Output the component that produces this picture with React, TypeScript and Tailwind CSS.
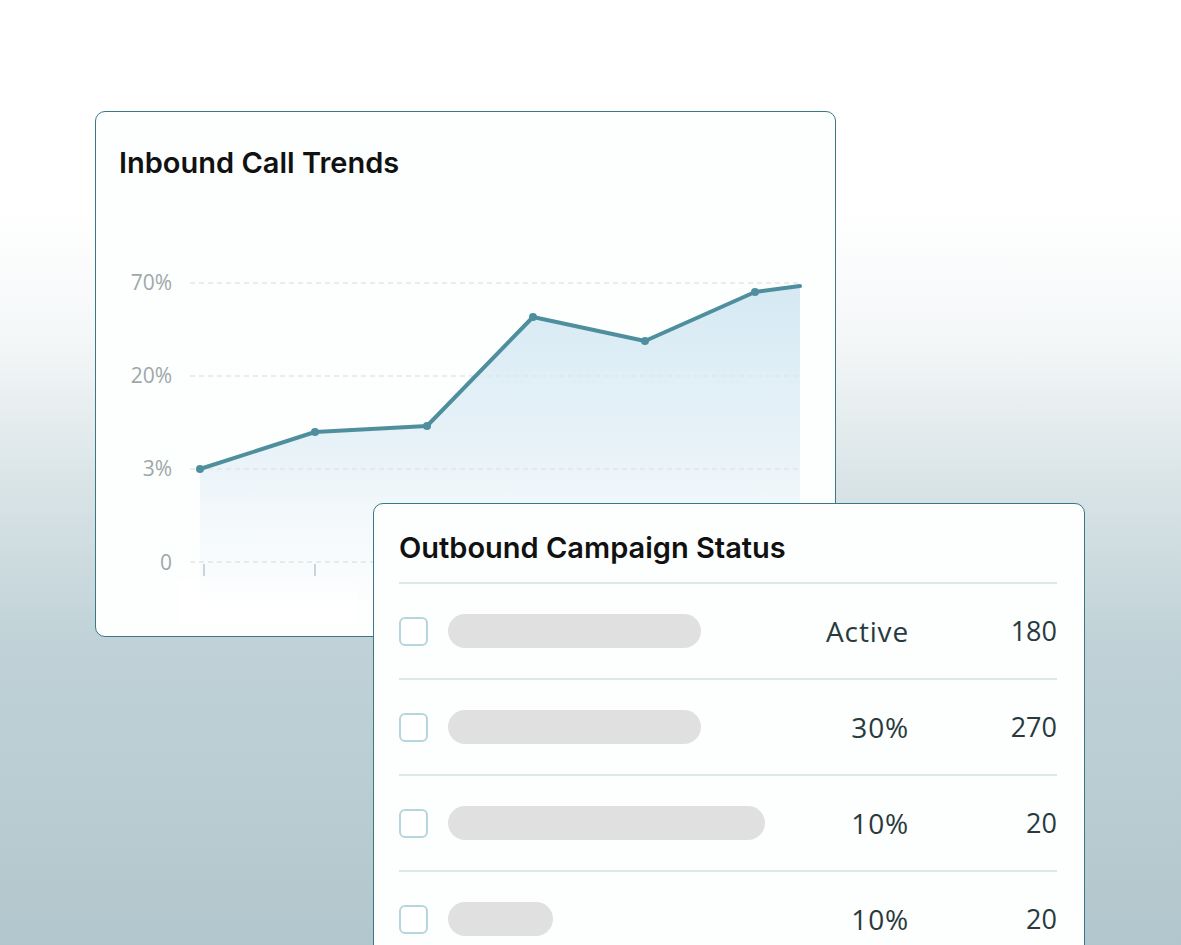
import React from "react";

const rows = [
  { pill: 253, status: "Active", num: "180" },
  { pill: 253, status: "30%", num: "270" },
  { pill: 317, status: "10%", num: "20" },
  { pill: 105, status: "10%", num: "20" },
];

function Chart() {
  const pts: [number, number][] = [
    [104, 269],
    [219, 232],
    [331, 226],
    [437, 117],
    [549, 141],
    [659, 92],
    [704, 86],
  ];
  const line = pts.map((p) => p.join(",")).join(" ");
  const area = `${pts[0][0]},400 ${line} ${pts[pts.length - 1][0]},400`;
  const grid = [83, 176, 269, 362];
  const labels: [string, number][] = [
    ["70%", 90],
    ["20%", 183],
    ["3%", 276],
    ["0", 370],
  ];
  return (
    <svg width="739" height="436" viewBox="0 0 739 436" className="block">
      <defs>
        <linearGradient id="fillg" x1="0" y1="0" x2="0" y2="1">
          <stop offset="0%" stopColor="#d3e8f3" stopOpacity="0.95" />
          <stop offset="55%" stopColor="#e4f0f7" stopOpacity="0.8" />
          <stop offset="100%" stopColor="#f8fbfc" stopOpacity="0.3" />
        </linearGradient>
      </defs>
      <rect x="82" y="380" width="180" height="45" fill="#ffffff" />
      <polygon points={area} fill="url(#fillg)" />
      {grid.map((y) => (
        <line
          key={y}
          x1="94"
          x2="704"
          y1={y}
          y2={y}
          stroke="#dfe6e9"
          strokeWidth="1.5"
          strokeDasharray="5 4"
        />
      ))}
      {labels.map(([t, y]) => (
        <text
          key={t}
          x="76"
          y={y}
          textAnchor="end"
          fill="#9ea8ab"
          fontSize="21"
          fontFamily="'Open Sans', sans-serif"
        >
          {t}
        </text>
      ))}
      <line x1="108" x2="108" y1="364" y2="376" stroke="#b9c8cd" strokeWidth="1.5" />
      <line x1="219" x2="219" y1="364" y2="376" stroke="#b9c8cd" strokeWidth="1.5" />
      <polyline
        points={line}
        fill="none"
        stroke="#4f8f9d"
        strokeWidth="4"
        strokeLinejoin="round"
        strokeLinecap="round"
      />
      {pts.slice(0, 6).map(([x, y]) => (
        <circle key={x} cx={x} cy={y} r="4" fill="#4f8f9d" />
      ))}
    </svg>
  );
}

export default function App() {
  return (
    <div className="h-[945px] w-full overflow-hidden bg-[linear-gradient(to_bottom,#ffffff_0%,#ffffff_22%,#f4f7f8_36%,#d8e3e6_52%,#c0d2d7_68%,#b2c7cd_100%)] pl-[95px] pt-[111px] font-['Inter',sans-serif]">
      <div className="h-[526px] w-[741px] rounded-[10px] border border-[#3b7785] bg-[#fdfefe]">
        <div className="pl-[23px] pt-[35px] text-[29px] font-semibold leading-[32px] text-[#111111]">
          Inbound Call Trends
        </div>
        <div className="mt-[21px]">
          <Chart />
        </div>
      </div>
      <div className="relative ml-[278px] mt-[-134px] h-[480px] w-[712px] rounded-[10px] border border-[#3b7785] bg-[#fdfefe] px-[25px]">
        <div className="pt-[28px] text-[29px] font-semibold leading-[32px] text-[#111111]">
          Outbound Campaign Status
        </div>
        <div className="mt-[18px] w-[658px]">
          {rows.map((r, i) => (
            <div
              key={i}
              className="flex h-[96px] items-center border-t-2 border-[#dbe8ea]"
            >
              <div className="h-[29px] w-[29px] shrink-0 rounded-[6px] border-2 border-[#b6d6dd] bg-white" />
              <div
                className="ml-[20px] h-[34px] shrink-0 rounded-full bg-[#e0e0e0]"
                style={{ width: r.pill }}
              />
              <div className="mr-[-3px] flex-1 text-right font-['Open_Sans',sans-serif] text-[28px] font-medium tracking-[0.03em] text-[#283a3d]">
                {r.status}
              </div>
              <div className="w-[151px] text-right font-['Open_Sans',sans-serif] text-[27px] font-medium text-[#283a3d]">
                {r.num}
              </div>
            </div>
          ))}
        </div>
      </div>
    </div>
  );
}
